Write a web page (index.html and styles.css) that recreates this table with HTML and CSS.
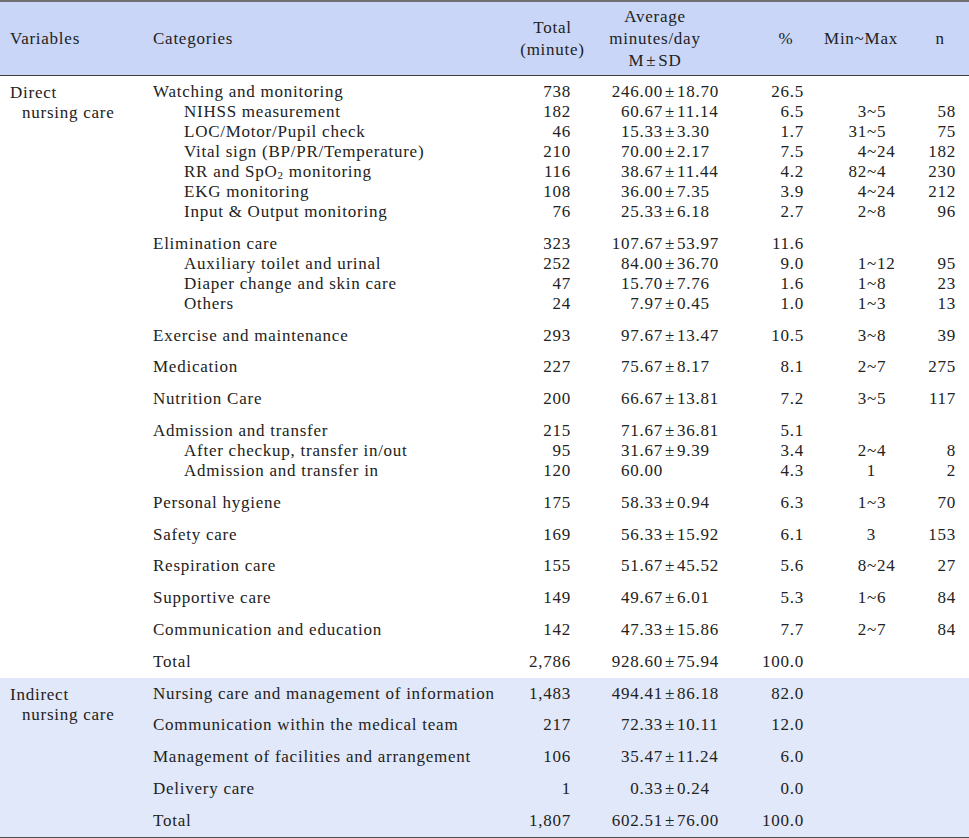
FILE: index.html
```html
<!DOCTYPE html>
<html>
<head>
<meta charset="utf-8">
<link rel="stylesheet" href="styles.css">
</head>
<body>
<table class="tbl">
  <colgroup>
    <col class="c1"><col class="c2"><col class="c3"><col class="c4"><col class="c5"><col class="c6"><col class="c7">
  </colgroup>
  <thead>
    <tr>
      <th class="h-var">Variables</th>
      <th class="h-cat">Categories</th>
      <th class="h-tot">Total<br>(minute)</th>
      <th class="h-avg">Average<br>minutes/day<br>M<span class="pm">±</span>SD</th>
      <th class="h-pct">%</th>
      <th class="h-mm">Min~Max</th>
      <th class="h-n">n</th>
    </tr>
  </thead>
  <tbody class="direct">
    <tr class="gs">
      <td class="var" rowspan="23"><div>Direct</div><div class="ind">nursing care</div></td>
      <td class="cat">Watching and monitoring</td><td class="tot">738</td>
      <td class="avg"><span class="m">246.00</span><span class="pm">±</span>18.70</td><td class="pct">26.5</td><td class="mm"></td><td class="n"></td>
    </tr>
    <tr><td class="cat sub">NIHSS measurement</td><td class="tot">182</td>
      <td class="avg"><span class="m">60.67</span><span class="pm">±</span>11.14</td><td class="pct">6.5</td>
      <td class="mm"><span class="lo">3</span>~5</td><td class="n">58</td></tr>
    <tr><td class="cat sub">LOC/Motor/Pupil check</td><td class="tot">46</td>
      <td class="avg"><span class="m">15.33</span><span class="pm">±</span>3.30</td><td class="pct">1.7</td>
      <td class="mm"><span class="lo">31</span>~5</td><td class="n">75</td></tr>
    <tr><td class="cat sub">Vital sign (BP/PR/Temperature)</td><td class="tot">210</td>
      <td class="avg"><span class="m">70.00</span><span class="pm">±</span>2.17</td><td class="pct">7.5</td>
      <td class="mm"><span class="lo">4</span>~24</td><td class="n">182</td></tr>
    <tr><td class="cat sub">RR and SpO<sub>2</sub> monitoring</td><td class="tot">116</td>
      <td class="avg"><span class="m">38.67</span><span class="pm">±</span>11.44</td><td class="pct">4.2</td>
      <td class="mm"><span class="lo">82</span>~4</td><td class="n">230</td></tr>
    <tr><td class="cat sub">EKG monitoring</td><td class="tot">108</td>
      <td class="avg"><span class="m">36.00</span><span class="pm">±</span>7.35</td><td class="pct">3.9</td>
      <td class="mm"><span class="lo">4</span>~24</td><td class="n">212</td></tr>
    <tr class="ge"><td class="cat sub">Input &amp; Output monitoring</td><td class="tot">76</td>
      <td class="avg"><span class="m">25.33</span><span class="pm">±</span>6.18</td><td class="pct">2.7</td>
      <td class="mm"><span class="lo">2</span>~8</td><td class="n">96</td></tr>

    <tr class="gs"><td class="cat">Elimination care</td><td class="tot">323</td>
      <td class="avg"><span class="m">107.67</span><span class="pm">±</span>53.97</td><td class="pct">11.6</td>
      <td class="mm"></td><td class="n"></td></tr>
    <tr><td class="cat sub">Auxiliary toilet and urinal</td><td class="tot">252</td>
      <td class="avg"><span class="m">84.00</span><span class="pm">±</span>36.70</td><td class="pct">9.0</td>
      <td class="mm"><span class="lo">1</span>~12</td><td class="n">95</td></tr>
    <tr><td class="cat sub">Diaper change and skin care</td><td class="tot">47</td>
      <td class="avg"><span class="m">15.70</span><span class="pm">±</span>7.76</td><td class="pct">1.6</td>
      <td class="mm"><span class="lo">1</span>~8</td><td class="n">23</td></tr>
    <tr class="ge"><td class="cat sub">Others</td><td class="tot">24</td>
      <td class="avg"><span class="m">7.97</span><span class="pm">±</span>0.45</td><td class="pct">1.0</td>
      <td class="mm"><span class="lo">1</span>~3</td><td class="n">13</td></tr>

    <tr class="gs ge"><td class="cat">Exercise and maintenance</td><td class="tot">293</td>
      <td class="avg"><span class="m">97.67</span><span class="pm">±</span>13.47</td><td class="pct">10.5</td>
      <td class="mm"><span class="lo">3</span>~8</td><td class="n">39</td></tr>
    <tr class="gs ge"><td class="cat">Medication</td><td class="tot">227</td>
      <td class="avg"><span class="m">75.67</span><span class="pm">±</span>8.17</td><td class="pct">8.1</td>
      <td class="mm"><span class="lo">2</span>~7</td><td class="n">275</td></tr>
    <tr class="gs ge"><td class="cat">Nutrition Care</td><td class="tot">200</td>
      <td class="avg"><span class="m">66.67</span><span class="pm">±</span>13.81</td><td class="pct">7.2</td>
      <td class="mm"><span class="lo">3</span>~5</td><td class="n">117</td></tr>

    <tr class="gs"><td class="cat">Admission and transfer</td><td class="tot">215</td>
      <td class="avg"><span class="m">71.67</span><span class="pm">±</span>36.81</td><td class="pct">5.1</td>
      <td class="mm"></td><td class="n"></td></tr>
    <tr><td class="cat sub">After checkup, transfer in/out</td><td class="tot">95</td>
      <td class="avg"><span class="m">31.67</span><span class="pm">±</span>9.39</td><td class="pct">3.4</td>
      <td class="mm"><span class="lo">2</span>~4</td><td class="n">8</td></tr>
    <tr class="ge"><td class="cat sub">Admission and transfer in</td><td class="tot">120</td>
      <td class="avg"><span class="m">60.00</span></td><td class="pct">4.3</td>
      <td class="mm"><span class="lo solo">1</span></td><td class="n">2</td></tr>

    <tr class="gs ge"><td class="cat">Personal hygiene</td><td class="tot">175</td>
      <td class="avg"><span class="m">58.33</span><span class="pm">±</span>0.94</td><td class="pct">6.3</td>
      <td class="mm"><span class="lo">1</span>~3</td><td class="n">70</td></tr>
    <tr class="gs ge"><td class="cat">Safety care</td><td class="tot">169</td>
      <td class="avg"><span class="m">56.33</span><span class="pm">±</span>15.92</td><td class="pct">6.1</td>
      <td class="mm"><span class="lo solo">3</span></td><td class="n">153</td></tr>
    <tr class="gs ge"><td class="cat">Respiration care</td><td class="tot">155</td>
      <td class="avg"><span class="m">51.67</span><span class="pm">±</span>45.52</td><td class="pct">5.6</td>
      <td class="mm"><span class="lo">8</span>~24</td><td class="n">27</td></tr>
    <tr class="gs ge"><td class="cat">Supportive care</td><td class="tot">149</td>
      <td class="avg"><span class="m">49.67</span><span class="pm">±</span>6.01</td><td class="pct">5.3</td>
      <td class="mm"><span class="lo">1</span>~6</td><td class="n">84</td></tr>
    <tr class="gs ge"><td class="cat">Communication and education</td><td class="tot">142</td>
      <td class="avg"><span class="m">47.33</span><span class="pm">±</span>15.86</td><td class="pct">7.7</td>
      <td class="mm"><span class="lo">2</span>~7</td><td class="n">84</td></tr>
    <tr class="gs ge"><td class="cat">Total</td><td class="tot">2,786</td>
      <td class="avg"><span class="m">928.60</span><span class="pm">±</span>75.94</td><td class="pct">100.0</td>
      <td class="mm"></td><td class="n"></td></tr>
  </tbody>
  <tbody class="indirect">
    <tr class="gs ge">
      <td class="var" rowspan="5"><div>Indirect</div><div class="ind">nursing care</div></td>
      <td class="cat">Nursing care and management of information</td><td class="tot">1,483</td>
      <td class="avg"><span class="m">494.41</span><span class="pm">±</span>86.18</td><td class="pct">82.0</td><td class="mm"></td><td class="n"></td>
    </tr>
    <tr class="gs ge"><td class="cat">Communication within the medical team</td><td class="tot">217</td>
      <td class="avg"><span class="m">72.33</span><span class="pm">±</span>10.11</td><td class="pct">12.0</td><td class="mm"></td><td class="n"></td></tr>
    <tr class="gs ge"><td class="cat">Management of facilities and arrangement</td><td class="tot">106</td>
      <td class="avg"><span class="m">35.47</span><span class="pm">±</span>11.24</td><td class="pct">6.0</td><td class="mm"></td><td class="n"></td></tr>
    <tr class="gs ge"><td class="cat">Delivery care</td><td class="tot">1</td>
      <td class="avg"><span class="m">0.33</span><span class="pm">±</span>0.24</td><td class="pct">0.0</td><td class="mm"></td><td class="n"></td></tr>
    <tr class="gs ge"><td class="cat">Total</td><td class="tot">1,807</td>
      <td class="avg"><span class="m">602.51</span><span class="pm">±</span>76.00</td><td class="pct">100.0</td><td class="mm"></td><td class="n"></td></tr>
  </tbody>
</table>
</body>
</html>
```

FILE: styles.css
```css
html, body {
  margin: 0;
  padding: 0;
  background: #ffffff;
}

body {
  font-family: "Liberation Serif", "Times New Roman", serif;
  font-size: 17px;
  letter-spacing: 0.75px;
  color: #222222;
}

.tbl {
  width: 969px;
  border-collapse: collapse;
  table-layout: fixed;
  border-top: 2px solid #707070;
  border-bottom: 2px solid #505050;
}

.c1 { width: 145px; }
.c2 { width: 365px; }
.c3 { width: 75px; }
.c4 { width: 150px; }
.c5 { width: 77px; }
.c6 { width: 98px; }
.c7 { width: 59px; }

thead tr {
  background: #c9d6f7;
  border-bottom: 1px solid #3e3e3e;
}

th {
  font-weight: normal;
  line-height: 22px;
  padding: 3.5px 0;
  vertical-align: middle;
  white-space: nowrap;
}

.h-var { text-align: left; padding-left: 10px; }
.h-cat { text-align: left; padding-left: 8px; }
.h-tot { text-align: center; padding-left: 10px; }
.h-avg { text-align: center; padding-right: 10px; }
.h-pct { text-align: center; padding-left: 25px; }
.h-mm { text-align: center; }
.h-n { text-align: center; padding-left: 14px; padding-right: 13px; }

td {
  padding: 0;
  line-height: 20px;
  vertical-align: top;
  white-space: nowrap;
}

tr.gs td { padding-top: 6px; }
tr.ge td { padding-bottom: 5.8px; }

td.var {
  padding: 6px 0 0 10px;
  vertical-align: top;
}

tr.gs td.var { padding-top: 7px; padding-bottom: 0; }

.var .ind { padding-left: 12px; }

.cat { padding-left: 8px; }
.cat.sub { padding-left: 39px; }

.cat sub {
  font-size: 11px;
  line-height: 0;
  vertical-align: -2px;
}

.tot { text-align: right; padding-right: 14px; }

.avg .m {
  display: inline-block;
  width: 78px;
  text-align: right;
}

.pm {
  padding: 0 2px 0 2px;
}

.pct { text-align: right; padding-right: 8px; }

.mm .lo {
  display: inline-block;
  width: 55px;
  text-align: right;
}

.mm .lo.solo { width: 64px; }

.n { text-align: right; padding-right: 13px; }

tbody.indirect {
  background: #e1e8f9;
}
```
